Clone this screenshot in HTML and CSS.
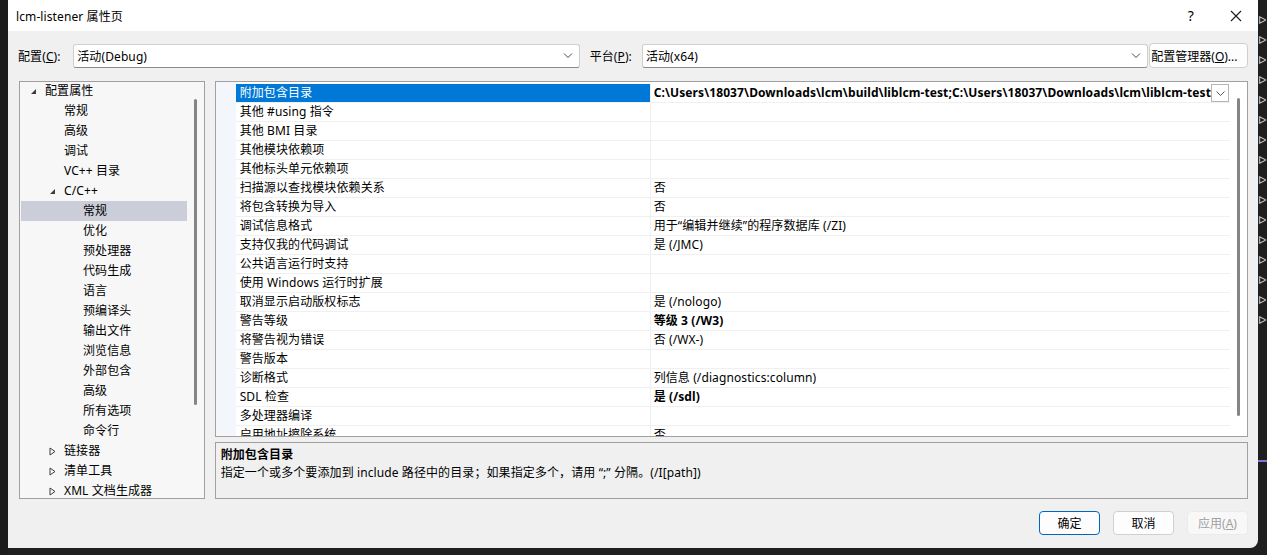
FILE: index.html
```html
<!DOCTYPE html>
<html lang="zh-cn">

<head>
    <meta charset="UTF-8">
    <title>lcm-listener 属性页</title>
    <link rel="stylesheet" href="styles.css">
</head>

<body>
    <div class="lado-esq"></div>

    <div class="janela">
        <div class="titulo">
            <span class="titulo-texto">lcm-listener 属性页</span>
            <span class="titulo-ajuda">?</span>
            <svg class="titulo-fechar" width="12" height="12" viewBox="0 0 12 12">
                <path d="M1 1 L11 11 M11 1 L1 11" stroke="#1a1a1a" stroke-width="1.1" fill="none"/>
            </svg>
        </div>

        <div class="conteudo">
            <div class="linha-config">
                <span class="rotulo">配置(<u>C</u>):</span>
                <div class="combo">
                    <span>活动(Debug)</span>
                    <svg width="10" height="6" viewBox="0 0 10 6"><path d="M1 0.5 L5 4.5 L9 0.5" stroke="#444" fill="none"/></svg>
                </div>
                <span class="rotulo rotulo-plat">平台(<u>P</u>):</span>
                <div class="combo">
                    <span>活动(x64)</span>
                    <svg width="10" height="6" viewBox="0 0 10 6"><path d="M1 0.5 L5 4.5 L9 0.5" stroke="#444" fill="none"/></svg>
                </div>
                <button class="btn-gerente">配置管理器(<u>O</u>)...</button>
            </div>

            <div class="area">
                <div class="arvore">
                    <div class="arvore-itens">
                        <div class="no n0"><svg class="seta" width="7" height="7" viewBox="0 0 7 7"><path d="M6 1 L6 6 L1 6 Z" fill="#3c3c3c"/></svg>配置属性</div>
                        <div class="no n1">常规</div>
                        <div class="no n1">高级</div>
                        <div class="no n1">调试</div>
                        <div class="no n1">VC++ 目录</div>
                        <div class="no n1b"><svg class="seta" width="7" height="7" viewBox="0 0 7 7"><path d="M6 1 L6 6 L1 6 Z" fill="#3c3c3c"/></svg>C/C++</div>
                        <div class="no n2 ativo">常规</div>
                        <div class="no n2">优化</div>
                        <div class="no n2">预处理器</div>
                        <div class="no n2">代码生成</div>
                        <div class="no n2">语言</div>
                        <div class="no n2">预编译头</div>
                        <div class="no n2">输出文件</div>
                        <div class="no n2">浏览信息</div>
                        <div class="no n2">外部包含</div>
                        <div class="no n2">高级</div>
                        <div class="no n2">所有选项</div>
                        <div class="no n2">命令行</div>
                        <div class="no n1b"><svg class="seta" width="7" height="9" viewBox="0 0 7 9"><path d="M1 1 L6 4.5 L1 8 Z" stroke="#3c3c3c" fill="none"/></svg>链接器</div>
                        <div class="no n1b"><svg class="seta" width="7" height="9" viewBox="0 0 7 9"><path d="M1 1 L6 4.5 L1 8 Z" stroke="#3c3c3c" fill="none"/></svg>清单工具</div>
                        <div class="no n1b"><svg class="seta" width="7" height="9" viewBox="0 0 7 9"><path d="M1 1 L6 4.5 L1 8 Z" stroke="#3c3c3c" fill="none"/></svg>XML 文档生成器</div>
                    </div>
                    <div class="rolagem rolagem-arvore"><div class="polegar"></div></div>
                </div>

                <div class="coluna">
                    <div class="grade">
                        <div class="margem"></div>
                        <div class="linhas">
                            <div class="linha sel">
                                <div class="nome">附加包含目录</div>
                                <div class="valor forte">
                                    <span class="valor-texto">C:\Users\18037\Downloads\lcm\build\liblcm-test;C:\Users\18037\Downloads\lcm\liblcm-test</span>
                                    <span class="drop"><svg width="9" height="5" viewBox="0 0 9 5"><path d="M0.5 0.5 L4.5 4.5 L8.5 0.5" stroke="#555" fill="none"/></svg></span>
                                </div>
                            </div>
                            <div class="linha"><div class="nome">其他 #using 指令</div><div class="valor"></div></div>
                            <div class="linha"><div class="nome">其他 BMI 目录</div><div class="valor"></div></div>
                            <div class="linha"><div class="nome">其他模块依赖项</div><div class="valor"></div></div>
                            <div class="linha"><div class="nome">其他标头单元依赖项</div><div class="valor"></div></div>
                            <div class="linha"><div class="nome">扫描源以查找模块依赖关系</div><div class="valor">否</div></div>
                            <div class="linha"><div class="nome">将包含转换为导入</div><div class="valor">否</div></div>
                            <div class="linha"><div class="nome">调试信息格式</div><div class="valor">用于“编辑并继续”的程序数据库 (/ZI)</div></div>
                            <div class="linha"><div class="nome">支持仅我的代码调试</div><div class="valor">是 (/JMC)</div></div>
                            <div class="linha"><div class="nome">公共语言运行时支持</div><div class="valor"></div></div>
                            <div class="linha"><div class="nome">使用 Windows 运行时扩展</div><div class="valor"></div></div>
                            <div class="linha"><div class="nome">取消显示启动版权标志</div><div class="valor">是 (/nologo)</div></div>
                            <div class="linha"><div class="nome">警告等级</div><div class="valor forte">等级 3 (/W3)</div></div>
                            <div class="linha"><div class="nome">将警告视为错误</div><div class="valor">否 (/WX-)</div></div>
                            <div class="linha"><div class="nome">警告版本</div><div class="valor"></div></div>
                            <div class="linha"><div class="nome">诊断格式</div><div class="valor">列信息 (/diagnostics:column)</div></div>
                            <div class="linha"><div class="nome">SDL 检查</div><div class="valor forte">是 (/sdl)</div></div>
                            <div class="linha"><div class="nome">多处理器编译</div><div class="valor"></div></div>
                            <div class="linha"><div class="nome">启用地址擦除系统</div><div class="valor">否</div></div>
                        </div>
                        <div class="rolagem rolagem-grade"><div class="polegar"></div></div>
                    </div>

                    <div class="descricao">
                        <div class="desc-titulo">附加包含目录</div>
                        <div class="desc-texto">指定一个或多个要添加到 include 路径中的目录；如果指定多个，请用 “;” 分隔。(/I[path])</div>
                    </div>
                </div>
            </div>

            <div class="botoes">
                <button class="btn btn-ok">确定</button>
                <button class="btn">取消</button>
                <button class="btn btn-off">应用(<u>A</u>)</button>
            </div>
        </div>
    </div>

    <div class="lado-dir">
        <span>ᐅ</span><span>ᐅ</span><span>ᐅ</span><span>ᐅ</span><span>ᐅ</span><span>ᐅ</span>
        <span>ᐅ</span><span>ᐅ</span><span>ᐅ</span><span>ᐅ</span><span>ᐅ</span><span>ᐅ</span>
        <span>ᐅ</span><span>ᐅ</span><span>ᐅ</span><span>ᐅ</span>
        <div class="roxo"></div>
    </div>
</body>

</html>
```

FILE: styles.css
```css
body {
    margin: 0;
    background: #1f1f1f;
    display: flex;
    height: 555px;
    overflow: hidden;
    font-family: "Noto Sans", "Noto Sans CJK SC", sans-serif;
    font-size: 12px;
    letter-spacing: 0.1px;
    color: #000;
}

.lado-esq {
    width: 8px;
    flex-shrink: 0;
    background: #1c1c1c;
}

.janela {
    width: 1250px;
    height: 548px;
    flex-shrink: 0;
    display: flex;
    flex-direction: column;
    background: #f0f0f0;
    border-radius: 0 0 8px 0;
    overflow: hidden;
}

.titulo {
    height: 31px;
    background: #ffffff;
    display: flex;
    align-items: center;
    padding-left: 8px;
}

.titulo-texto {
    flex: 1;
    font-size: 12px;
}

.titulo-ajuda {
    font-size: 14px;
    margin-right: 36px;
}

.titulo-fechar {
    margin-right: 16px;
}

.conteudo {
    flex: 1;
    display: flex;
    flex-direction: column;
    padding: 12px 10px 0 11px;
}

.linha-config {
    display: flex;
    align-items: center;
    height: 25px;
}

.rotulo {
    width: 56px;
    margin-left: -1px;
}

.rotulo-plat {
    margin-left: 10px;
    width: 53px;
}

.combo {
    width: 502px;
    height: 22px;
    background: #fff;
    border: 1px solid #cfcfcf;
    border-bottom-color: #8a8a8a;
    border-radius: 3px;
    display: flex;
    align-items: center;
    justify-content: space-between;
    padding: 0 6px 0 3px;
    box-sizing: content-box;
}

.btn-gerente {
    margin-left: 1px;
    width: 100px;
    height: 25px;
    background: #fdfdfd;
    border: 1px solid #d0d0d0;
    border-radius: 4px;
    font-family: inherit;
    font-size: 12px;
    letter-spacing: 0;
    padding: 0 1px;
    white-space: nowrap;
    text-align: left;
}

.area {
    display: flex;
    gap: 10px;
    margin-top: 13px;
    height: 418px;
}

.arvore {
    width: 185px;
    border: 1px solid #a0a0a0;
    background: #f7f7f7;
    display: flex;
    overflow: hidden;
}

.arvore-itens {
    flex: 1;
    margin-top: -1px;
    padding-left: 1px;
}

.no {
    height: 20px;
    line-height: 20px;
    white-space: nowrap;
    display: flex;
    align-items: center;
}

.seta {
    margin-right: 8px;
}

.n0 {
    padding-left: 9px;
}

.n1 {
    padding-left: 43px;
}

.n1b {
    padding-left: 28px;
}

.n2 {
    padding-left: 62px;
}

.ativo {
    background: #cbcdd9;
}

.rolagem {
    width: 17px;
    flex-shrink: 0;
}

.polegar {
    width: 3px;
    margin-left: 7px;
    background: #858585;
    border-radius: 2px;
}

.rolagem-arvore .polegar {
    margin-top: 17px;
    height: 306px;
}

.coluna {
    flex: 1;
    display: flex;
    flex-direction: column;
    gap: 5px;
}

.grade {
    height: 356px;
    border: 1px solid #a0a0a0;
    background: #fff;
    display: flex;
    overflow: hidden;
}

.margem {
    width: 20px;
    background: #f3f6fb;
    flex-shrink: 0;
}

.linhas {
    flex: 1;
    padding-top: 2px;
    overflow: hidden;
}

.linha {
    display: flex;
    height: 19px;
    border-bottom: 1px solid #f0f0f0;
    box-sizing: border-box;
}

.nome {
    width: 410px;
    padding-left: 4px;
    line-height: 18px;
    white-space: nowrap;
    flex-shrink: 0;
}

.valor {
    flex: 1;
    border-left: 1px solid #f0f0f0;
    padding-left: 3px;
    line-height: 18px;
    white-space: nowrap;
    overflow: hidden;
    display: flex;
}

.forte {
    font-weight: bold;
}

.sel .nome {
    background: #0078d7;
    color: #fff;
}

.sel .valor {
    padding-right: 1px;
}

.valor-texto {
    flex: 1;
    overflow: hidden;
}

.drop {
    width: 16px;
    height: 16px;
    margin-top: 0;
    border: 1px solid #b5b5b5;
    background: #fff;
    display: flex;
    align-items: center;
    justify-content: center;
    flex-shrink: 0;
}

.rolagem-grade .polegar {
    margin-top: 16px;
    height: 318px;
}

.descricao {
    height: 51px;
    border: 1px solid #a0a0a0;
    padding: 2px 5px;
}

.desc-titulo {
    font-weight: bold;
    line-height: 19px;
}

.desc-texto {
    line-height: 18px;
}

.botoes {
    display: flex;
    justify-content: flex-end;
    gap: 13px;
    margin-top: 12px;
}

.btn {
    width: 61px;
    height: 24px;
    background: #fdfdfd;
    border: 1px solid #d0d0d0;
    border-radius: 4px;
    font-family: inherit;
    font-size: 12px;
    padding: 0;
}

.btn-ok {
    border-color: #0067c0;
}

.btn-off {
    background: #f8f8f8;
    border-color: #ebebeb;
    color: #a0a0a0;
}

.lado-dir {
    flex: 1;
    background: #1f1f1f;
    display: flex;
    flex-direction: column;
    padding-top: 10px;
    color: #cfcfcf;
    font-size: 11px;
    overflow: hidden;
}

.lado-dir span {
    height: 20px;
    line-height: 20px;
}

.roxo {
    margin-top: 130px;
    height: 2px;
    background: #8a6fd8;
}
```
